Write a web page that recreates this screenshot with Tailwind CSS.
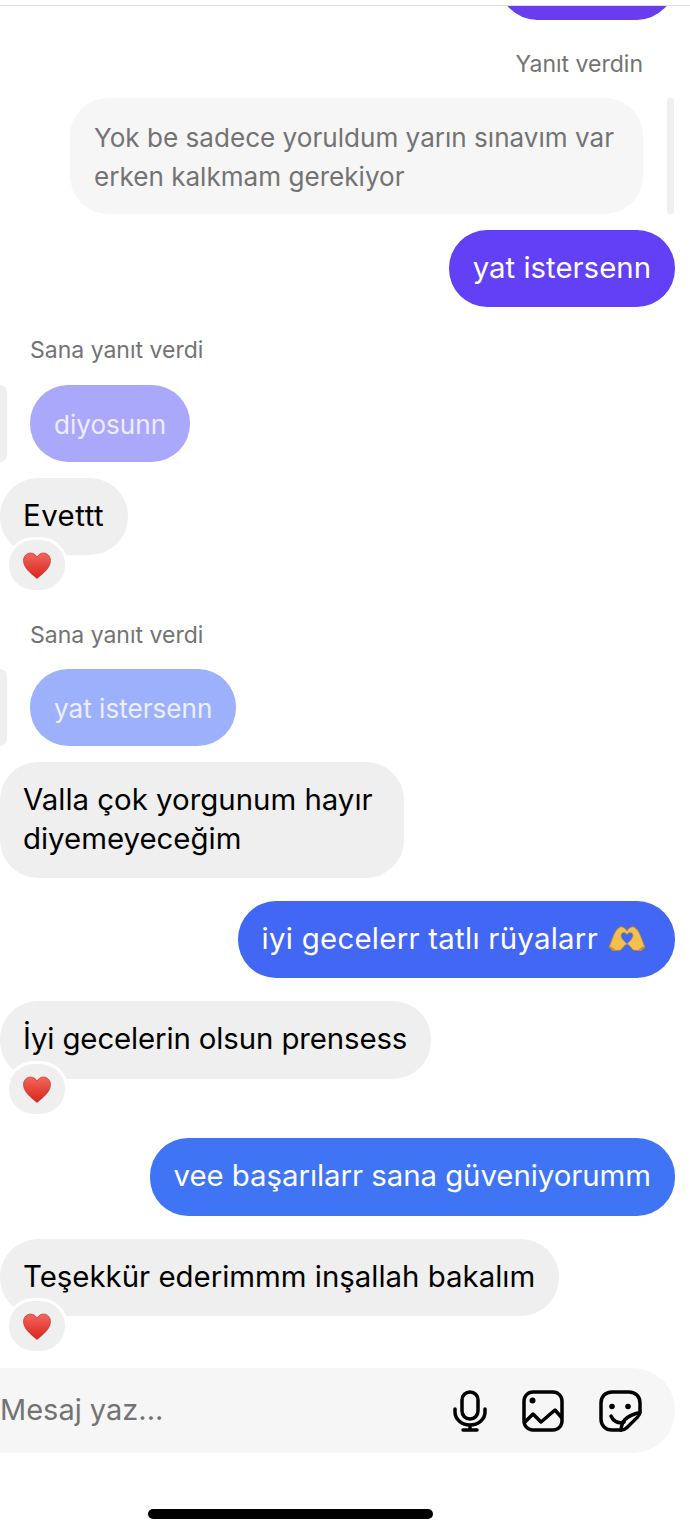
<!doctype html>
<html><head><meta charset="utf-8"><script src="https://cdn.jsdelivr.net/npm/@tailwindcss/browser@4"></script></head>
<body class="bg-white">
<div class="relative w-[690px] h-[1534px] overflow-hidden bg-white font-['Inter','Liberation_Sans',sans-serif] text-[29.4px] leading-[39px] text-black">
  <div class="h-[5px]"></div>
  <div class="h-px bg-[#dcdcdc] relative z-10"></div>
  <div class="h-[14px] overflow-hidden pr-[15px] flex justify-end items-end"><div class="w-[176px] h-[77px] shrink-0 bg-[#6a3cf0] rounded-[38px]"></div></div>

  <div class="mt-[29px] pr-[47px] text-right text-[23px] leading-[30px] text-[#737373]">Yanıt verdin</div>
  <div class="mt-[19px] flex justify-end pr-[16px] gap-[24px]">
    <div class="w-[573px] rounded-[38px] bg-[#f6f6f6] px-[24px] pt-[20px] pb-[18px] text-[26.1px] text-[#737373]">Yok be sadece yoruldum yarın sınavım var erken kalkmam gerekiyor</div>
    <div class="w-[7px] rounded-full bg-[#efefef]"></div>
  </div>
  <div class="mt-[16px] flex justify-end pr-[15px]"><div class="rounded-[38px] bg-[#6240f6] px-[24px] pt-[18px] pb-[20px] text-white">yat istersenn</div></div>

  <div class="mt-[28px] pl-[30px] text-[23px] leading-[30px] text-[#737373]">Sana yanıt verdi</div>
  <div class="mt-[20px] flex gap-[23px]">
    <div class="w-[7px] rounded-r-full bg-[#efefef]"></div>
    <div class="rounded-[38px] bg-[#a9a8fb] px-[24px] pt-[20px] pb-[18px] text-[26.1px] text-white/80">diyosunn</div>
  </div>
  <div class="mt-[16px] flex"><div class="relative rounded-[38px] bg-[#efefef] pl-[23px] pr-[24px] pt-[18px] pb-[20px] tracking-[0.5px]">Evettt
    <div class="absolute left-[6px] top-[59px] w-[62px] h-[56px] rounded-full border-[3px] border-white bg-[#efefef] flex items-center justify-center">
      <svg width="30" height="29" viewBox="0 0 30 29"><defs><linearGradient id="h1" x1="0" y1="0" x2="0" y2="1"><stop offset="0" stop-color="#f2665c"/><stop offset="1" stop-color="#d8251d"/></linearGradient></defs><path d="M15 27.500C9 22.500 1.500 17 1.500 9.500 1.500 5 5 2 8.500 2 11.200 2 13.500 3.500 15 6 16.500 3.500 18.800 2 21.500 2 25 2 28.500 5 28.500 9.500 28.500 17 21 22.500 15 27.500Z" fill="url(#h1)" stroke="#b3261e" stroke-width=".6"/></svg>
    </div></div></div>

  <div class="mt-[65px] pl-[30px] text-[23px] leading-[30px] text-[#737373]">Sana yanıt verdi</div>
  <div class="mt-[19px] flex gap-[23px]">
    <div class="w-[7px] rounded-r-full bg-[#efefef]"></div>
    <div class="rounded-[38px] bg-[#9db0fb] px-[24px] pt-[20px] pb-[18px] text-[26.1px] text-white/80">yat istersenn</div>
  </div>
  <div class="mt-[16px] flex"><div class="w-[404px] rounded-[38px] bg-[#efefef] pl-[23px] pr-[24px] pt-[18px] pb-[20px]">Valla çok yorgunum hayır diyemeyeceğim</div></div>
  <div class="mt-[23px] flex justify-end pr-[15px]"><div class="flex items-center gap-[10px] rounded-[38px] bg-[#4367f5] pl-[24px] pr-[29px] pt-[18px] pb-[20px] text-white tracking-[0.27px]">iyi gecelerr tatlı rüyalarr
    <svg width="38" height="25" viewBox="0 0 38 25"><path d="M1 21C4 15 6 4 12 1 15 0 18 3 19 5 20 3 23 0 26 1 32 4 34 15 37 21L33 25 25 24C23 21 21 19 19 18 17 19 15 21 13 24L5 25Z" fill="#f2bf50" stroke="#b5802c" stroke-width=".8"/><path d="M19 8.500C17 5.500 13 6 13 9.500 13 12.500 16 15 19 18 22 15 25 12.500 25 9.500 25 6 21 5.500 19 8.500Z" fill="#4367f5" stroke="#c9922f" stroke-width=".6"/><path d="M2 21 7 24.500M36 21 31 24.500" stroke="#c98e2e" stroke-width="2"/></svg>
  </div></div>
  <div class="mt-[23px] flex"><div class="relative rounded-[38px] bg-[#efefef] pl-[23px] pr-[24px] pt-[18px] pb-[21px] tracking-[-0.12px]">İyi gecelerin olsun prensess
    <div class="absolute left-[6px] top-[60px] w-[62px] h-[56px] rounded-full border-[3px] border-white bg-[#efefef] flex items-center justify-center">
      <svg width="30" height="29" viewBox="0 0 30 29"><defs><linearGradient id="h2" x1="0" y1="0" x2="0" y2="1"><stop offset="0" stop-color="#f2665c"/><stop offset="1" stop-color="#d8251d"/></linearGradient></defs><path d="M15 27.500C9 22.500 1.500 17 1.500 9.500 1.500 5 5 2 8.500 2 11.200 2 13.500 3.500 15 6 16.500 3.500 18.800 2 21.500 2 25 2 28.500 5 28.500 9.500 28.500 17 21 22.500 15 27.500Z" fill="url(#h2)" stroke="#b3261e" stroke-width=".6"/></svg>
    </div></div></div>
  <div class="mt-[59px] flex justify-end pr-[15px]"><div class="rounded-[38px] bg-[#3f74f5] px-[24px] pt-[18px] pb-[21px] text-white tracking-[-0.05px]">vee başarılarr sana güveniyorumm</div></div>
  <div class="mt-[23px] flex"><div class="relative rounded-[38px] bg-[#efefef] pl-[23px] pr-[24px] pt-[18px] pb-[20px]">Teşekkür ederimmm inşallah bakalım
    <div class="absolute left-[6px] top-[59px] w-[62px] h-[56px] rounded-full border-[3px] border-white bg-[#efefef] flex items-center justify-center">
      <svg width="30" height="29" viewBox="0 0 30 29"><defs><linearGradient id="h3" x1="0" y1="0" x2="0" y2="1"><stop offset="0" stop-color="#f2665c"/><stop offset="1" stop-color="#d8251d"/></linearGradient></defs><path d="M15 27.500C9 22.500 1.500 17 1.500 9.500 1.500 5 5 2 8.500 2 11.200 2 13.500 3.500 15 6 16.500 3.500 18.800 2 21.500 2 25 2 28.500 5 28.500 9.500 28.500 17 21 22.500 15 27.500Z" fill="url(#h3)" stroke="#b3261e" stroke-width=".6"/></svg>
    </div></div></div>

  <div class="mt-[52px] mr-[15px] h-[85px] rounded-r-[42px] bg-[#f6f6f6] flex items-center text-[#737373] text-[29px]">
    <span class="flex-1 pb-[2px]">Mesaj yaz...</span>
    <svg class="mr-[35px]" width="34" height="42" viewBox="0 0 34 42" fill="none" stroke="#000" stroke-width="3.500" stroke-linecap="round"><rect x="9" y="2" width="16" height="27" rx="8"/><path d="M2 19v3c0 7.500 7 13 15 13s15-5.500 15-13v-3M17 35v5M10 40h14"/></svg>
    <svg class="mr-[35px]" width="42" height="42" viewBox="0 0 42 42" fill="none" stroke="#000" stroke-width="3.500" stroke-linejoin="round"><rect x="2" y="2" width="38" height="38" rx="9"/><circle cx="10.500" cy="10.500" r="3" fill="#000" stroke="none"/><path d="M3 32l8-8 8 8 14-12 7 8"/></svg>
    <svg class="mr-[33px]" width="43" height="42" viewBox="0 0 43 42" fill="none" stroke="#000" stroke-width="3.500" stroke-linejoin="round" stroke-linecap="round"><path d="M22 40H13C6.500 40 2 35.500 2 29V13C2 6.500 6.500 2 13 2H30C36.500 2 41 6.500 41 13V21C41 23.500 40 25.500 38.500 27L28 37.500C26.500 39 24.500 40 22 40Z"/><path d="M22 40C22.500 35 23.500 32 26 29.500 29 26.500 34 24 41 22.500" fill="#f6f6f6" stroke="none"/><path d="M22 40C22.500 35 23.500 32 26 29.500 29 26.500 34 24 41 22.500"/><path d="M12 26C14 31 19 34 25 32"/><circle cx="13" cy="16.500" r="2.800" fill="#000" stroke="none"/><circle cx="29" cy="16.500" r="2.800" fill="#000" stroke="none"/></svg>
  </div>
  <div class="mt-[56px] ml-[148px] w-[285px] h-[10px] rounded-full bg-black"></div>
</div>
</body></html>
